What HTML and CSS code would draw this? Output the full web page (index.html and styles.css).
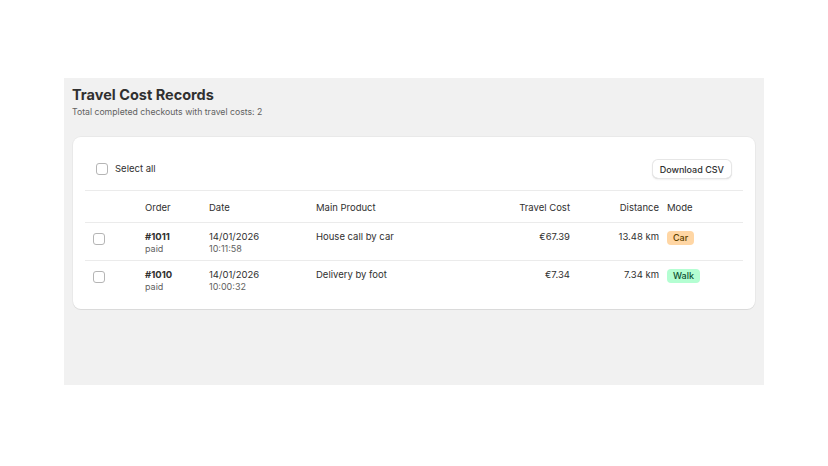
FILE: index.html
```html
<!DOCTYPE html>
<html>
<head>
<meta charset="utf-8">
<link rel="stylesheet" href="styles.css">
</head>
<body>
<div class="frame">
  <h1 class="title">Travel Cost Records</h1>
  <p class="subtitle">Total completed checkouts with travel costs: 2</p>
  <div class="card">
    <div class="toolbar">
      <label class="select-all"><span class="checkbox"></span>Select all</label>
      <button class="btn">Download CSV</button>
    </div>
    <div class="row head">
      <div></div>
      <div>Order</div>
      <div>Date</div>
      <div>Main Product</div>
      <div class="num">Travel Cost</div>
      <div class="num">Distance</div>
      <div class="mode">Mode</div>
    </div>
    <div class="row">
      <div><span class="checkbox cb-row"></span></div>
      <div><div class="strong">#1011</div><div class="sub">paid</div></div>
      <div><div>14/01/2026</div><div class="sub">10:11:58</div></div>
      <div>House call by car</div>
      <div class="num">€67.39</div>
      <div class="num">13.48 km</div>
      <div class="mode"><span class="badge car">Car</span></div>
    </div>
    <div class="row last">
      <div><span class="checkbox cb-row"></span></div>
      <div><div class="strong">#1010</div><div class="sub">paid</div></div>
      <div><div>14/01/2026</div><div class="sub">10:00:32</div></div>
      <div>Delivery by foot</div>
      <div class="num">€7.34</div>
      <div class="num">7.34 km</div>
      <div class="mode"><span class="badge walk">Walk</span></div>
    </div>
  </div>
</div>
</body>
</html>
```
FILE: styles.css
```css
* { box-sizing: border-box; }
html, body { margin: 0; padding: 0; background: #fff; }
body {
  font-family: Inter, "Noto Sans", sans-serif;
  color: #303030;
  font-size: 9.5px;
}
.frame {
  margin: 78px 0 0 64px;
  width: 700px;
  height: 307px;
  background: #f1f1f1;
  padding: 7px 8px 8px;
}
.title {
  margin: 0;
  font-size: 14.5px;
  line-height: 20px;
  font-weight: 700;
  color: #303030;
}
.subtitle {
  margin: 1px 0 0;
  font-size: 8.7px;
  line-height: 12px;
  color: #616161;
}
.card {
  margin: 19px 1px 0;
  background: #fff;
  border-radius: 8px;
  box-shadow: 0 1px 0 rgba(26,26,26,0.07), 0 0 0 1px rgba(0,0,0,0.03);
  padding: 12px;
}
.toolbar {
  display: flex;
  align-items: center;
  justify-content: space-between;
  padding: 10px 11px 11px;
  border-bottom: 1px solid #ebebeb;
}
.select-all {
  display: flex;
  align-items: center;
  gap: 7px;
  line-height: 12px;
  color: #303030;
}
.checkbox {
  display: inline-block;
  width: 12px;
  height: 12px;
  border: 1px solid #b5b5b5;
  border-radius: 3px;
  background: #fff;
}
.btn {
  font-family: Inter, "Noto Sans", sans-serif;
  font-size: 9px;
  font-weight: 500;
  color: #303030;
  height: 20px;
  padding: 0 8px;
  background: #fff;
  border: none;
  border-radius: 6px;
  box-shadow: 0 0 0 1px #e6e6e6 inset, 0 -1px 0 0 #cfcfcf inset, 0 1px 2px rgba(0,0,0,0.06);
}
.row {
  display: grid;
  grid-template-columns: 52px 64px 107px 1fr 100px 89px 76px;
  padding: 8px 8px 5px;
  line-height: 12px;
  border-bottom: 1px solid #ebebeb;
}
.row.head {
  padding: 11px 8px 8px;
  color: #303030;
}
.row.last { border-bottom: none; padding-bottom: 4px; }
.num { text-align: right; }
.mode { padding-left: 8px; }
.strong { font-weight: 700; }
.sub { color: #616161; font-size: 9px; line-height: 12px; }
.cb-row { margin-top: 2px; }
.badge {
  display: inline-block;
  font-size: 9px;
  line-height: 14px;
  padding: 0 6px;
  border-radius: 4px;
  font-weight: 500;
}
.badge.car { background: #ffd6a4; color: #5e4200; }
.badge.walk { background: #b4fed2; color: #0c5132; }
```
